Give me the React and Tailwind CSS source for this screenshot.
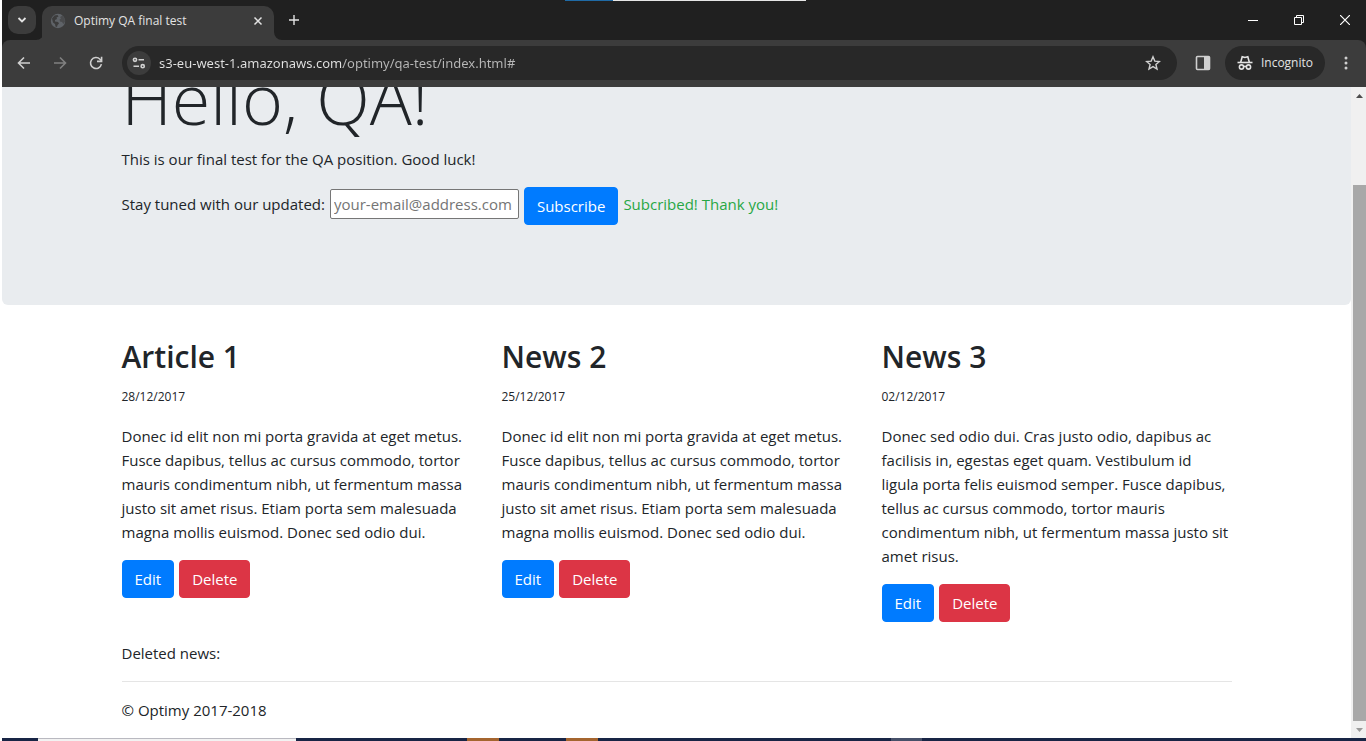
import React from "react";

const articles = [
  {
    title: "Article 1",
    date: "28/12/2017",
    body: "Donec id elit non mi porta gravida at eget metus. Fusce dapibus, tellus ac cursus commodo, tortor mauris condimentum nibh, ut fermentum massa justo sit amet risus. Etiam porta sem malesuada magna mollis euismod. Donec sed odio dui.",
  },
  {
    title: "News 2",
    date: "25/12/2017",
    body: "Donec id elit non mi porta gravida at eget metus. Fusce dapibus, tellus ac cursus commodo, tortor mauris condimentum nibh, ut fermentum massa justo sit amet risus. Etiam porta sem malesuada magna mollis euismod. Donec sed odio dui.",
  },
  {
    title: "News 3",
    date: "02/12/2017",
    body: "Donec sed odio dui. Cras justo odio, dapibus ac facilisis in, egestas eget quam. Vestibulum id ligula porta felis euismod semper. Fusce dapibus, tellus ac cursus commodo, tortor mauris condimentum nibh, ut fermentum massa justo sit amet risus.",
  },
];

function TabStrip() {
  return (
    <div className="flex h-10 items-center bg-[#202020] text-[#e3e3e3]">
      <button aria-label="Search tabs" className="ml-1.5 flex size-7 items-center justify-center rounded-[10px] bg-[#3c3c3c]">
        <svg width="10" height="8" viewBox="0 0 10 8" fill="none" stroke="currentColor" strokeWidth="1.8">
          <path d="M1.5 2 5 5.5 8.5 2" />
        </svg>
      </button>
      <svg className="self-end" width="8" height="8" viewBox="0 0 8 8" fill="#3c3c3c">
        <path d="M8 0v8H0a8 8 0 0 0 8-8z" />
      </svg>
      <div className="-ml-0.5 flex h-[34px] w-[232px] items-center self-end rounded-t-[10px] bg-[#3c3c3c] px-2 pb-1">
        <svg width="16" height="16" viewBox="0 0 16 16">
          <circle cx="8" cy="8" r="7.2" fill="#5f6368" />
          <path d="M2 5.500 4.500 2.500 7.500 2l1 1.500-2 1 .5 1.500-2 1v1.500l3 .5 1 1.500-1.500 1.500-.5 2-1.500-.5-.5-2.500-2-1.500z" fill="#3c3c3c" />
          <path d="M10 4l2.500-1.500 2 3 .5 3-1.500 2.500-1.500-2-2-.5-.5-2 1.500-1z" fill="#3c3c3c" opacity=".6" />
        </svg>
        <span className="ml-2 flex-1 text-[12px] leading-4 whitespace-nowrap">Optimy QA final test</span>
        <button aria-label="Close tab" className="flex size-4 items-center justify-center">
          <svg width="10" height="10" viewBox="0 0 10 10" stroke="currentColor" strokeWidth="1.5">
            <path d="M1.500 1.500l7 7M8.500 1.500l-7 7" />
          </svg>
        </button>
      </div>
      <svg className="self-end" width="8" height="8" viewBox="0 0 8 8" fill="#3c3c3c">
        <path d="M0 0v8h8a8 8 0 0 1-8-8z" />
      </svg>
      <button aria-label="New tab" className="ml-0.5 flex size-5 items-center justify-center">
        <svg width="12" height="12" viewBox="0 0 12 12" stroke="currentColor" strokeWidth="1.400">
          <path d="M6 1v10M1 6h10" />
        </svg>
      </button>
      <div className="ml-auto flex text-white">
        <button aria-label="Minimize" className="flex h-8 w-[46px] items-center justify-center">
          <svg width="10" height="10" viewBox="0 0 10 10" stroke="currentColor">
            <path d="M0 5.500h10" />
          </svg>
        </button>
        <button aria-label="Restore" className="flex h-8 w-[46px] items-center justify-center">
          <svg width="10" height="10" viewBox="0 0 10 10" stroke="currentColor" fill="none">
            <path d="M.5 2.500h7v7h-7zM2.500 2.500v-2h7v7h-2" />
          </svg>
        </button>
        <button aria-label="Close" className="flex h-8 w-11 items-center justify-center pl-0.5">
          <svg width="10" height="10" viewBox="0 0 10 10" stroke="currentColor" strokeWidth="1.200">
            <path d="M0 0l10 10M10 0L0 10" />
          </svg>
        </button>
      </div>
    </div>
  );
}

function Toolbar() {
  return (
    <div className="flex h-[47px] items-center rounded-t-lg bg-[#3c3c3c] pb-px text-[#d0d0d0]">
      <button aria-label="Back" className="ml-2.5 flex size-6 items-center justify-center">
        <svg width="14" height="14" viewBox="0 0 14 14" fill="none" stroke="currentColor" strokeWidth="1.600">
          <path d="M13 7H2M7 1.500 1.500 7 7 12.500" />
        </svg>
      </button>
      <button aria-label="Forward" className="ml-3 flex size-6 items-center justify-center text-[#808080]">
        <svg width="14" height="14" viewBox="0 0 14 14" fill="none" stroke="currentColor" strokeWidth="1.600">
          <path d="M1 7h11M7 1.500 12.500 7 7 12.500" />
        </svg>
      </button>
      <button aria-label="Reload" className="ml-3 flex size-6 items-center justify-center">
        <svg width="14" height="14" viewBox="0 0 14 14" fill="none" stroke="currentColor" strokeWidth="1.600">
          <path d="M12.400 8.200A5.500 5.500 0 1 1 11 3.200L12.500 4.700" />
          <path d="M12.600 .8v4.600H8" />
        </svg>
      </button>
      <div className="ml-3.5 flex h-[34px] flex-1 items-center rounded-full bg-[#282828] pr-4 pl-[5px]">
        <button aria-label="View site information" className="flex size-6 items-center justify-center rounded-full bg-[#3c3c3c]">
          <svg width="14" height="12" viewBox="0 0 14 12" fill="none" stroke="currentColor" strokeWidth="1.600">
            <circle cx="3" cy="2.800" r="1.600" />
            <path d="M6.500 2.800H12M1.500 9.200H7" />
            <circle cx="10.700" cy="9.200" r="1.600" />
          </svg>
        </button>
        <input
          aria-label="Address"
          readOnly
          defaultValue="s3-eu-west-1.amazonaws.com/optimy/qa-test/index.html#"
          className="ml-2 min-w-0 flex-1 bg-[linear-gradient(to_right,#e3e3e3_184px,#b8b8b8_184px)] bg-clip-text font-['Noto_Sans',sans-serif] text-[13px] leading-5 text-transparent outline-none"
        />
        <button aria-label="Bookmark this tab">
          <svg width="16" height="16" viewBox="0 0 16 16" fill="none" stroke="currentColor" strokeWidth="1.400">
            <path d="M8 1.800l1.800 4.300 4.600.4-3.500 3 1.100 4.500L8 11.600 4 14l1.100-4.500-3.500-3 4.600-.4z" />
          </svg>
        </button>
      </div>
      <button aria-label="Side panel" className="ml-[18px] flex size-4 items-center justify-center">
        <svg width="16" height="16" viewBox="0 0 16 16">
          <rect x="1.500" y="1.500" width="13" height="13" rx="1" fill="none" stroke="currentColor" strokeWidth="1.600" />
          <path d="M9 1.500h5.500v13H9z" fill="currentColor" />
        </svg>
      </button>
      <button className="ml-3.5 flex h-[34px] items-center gap-2 rounded-full bg-[#282828] px-3 text-[12px] text-[#e3e3e3]">
        <svg width="16" height="16" viewBox="0 0 16 16" fill="none" stroke="currentColor" strokeWidth="1.600">
          <path d="M.5 7.500h15" />
          <path d="M3.700 7.200 5.200 1.700l2.800.8 2.800-.8 1.500 5.500" />
          <circle cx="4.500" cy="12" r="2.100" />
          <circle cx="11.500" cy="12" r="2.100" />
          <path d="M6.500 11.700Q8 10.800 9.500 11.700" />
        </svg>
        Incognito
      </button>
      <button aria-label="Menu" className="mr-2.5 ml-[11px] flex h-6 w-5 items-center justify-center">
        <svg width="4" height="16" viewBox="0 0 4 16" fill="currentColor">
          <circle cx="2" cy="3" r="1.500" />
          <circle cx="2" cy="8" r="1.500" />
          <circle cx="2" cy="13" r="1.500" />
        </svg>
      </button>
    </div>
  );
}

function Article({ title, date, body }) {
  return (
    <article>
      <h2 className="mb-2.5 text-[30px] leading-[38px] font-semibold">{title}</h2>
      <p className="mb-4 text-[12px] leading-[22px]">{date}</p>
      <p className="mb-4 leading-6">{body}</p>
      <div className="flex gap-[5px]">
        <button className="h-[38px] rounded border border-[#007bff] bg-[#007bff] px-3 text-white">Edit</button>
        <button className="h-[38px] rounded border border-[#dc3545] bg-[#dc3545] px-3 text-white">Delete</button>
      </div>
    </article>
  );
}

function Scrollbar() {
  return (
    <div className="flex w-[15px] flex-col bg-[#f0f0f0] pl-0.5" aria-hidden="true">
      <div className="flex h-[17px] items-center justify-center">
        <svg width="7" height="4" viewBox="0 0 7 4" fill="#4d4d4d">
          <path d="M0 4 3.500 0 7 4z" />
        </svg>
      </div>
      <div className="flex flex-1 flex-col pt-[81px]">
        <div className="flex-1 bg-[#a8a8a8]" />
      </div>
      <div className="flex h-[17px] items-center justify-center">
        <svg width="7" height="4" viewBox="0 0 7 4" fill="#9a9a9a">
          <path d="M0 0h7L3.500 4z" />
        </svg>
      </div>
    </div>
  );
}

export default function App() {
  return (
    <div className="flex h-screen flex-col overflow-hidden bg-white font-['Open_Sans','Noto_Sans',sans-serif]">
      <div className="relative ml-0.5 bg-[#202020]">
        <TabStrip />
        <Toolbar />
        <div className="absolute top-0 left-[563px] flex h-px w-[241px] bg-[#e6e6e6]">
          <div className="w-12 bg-[#1f6aa5]" />
        </div>
      </div>

      <div className="ml-0.5 flex min-h-0 flex-1">
        <main className="min-w-0 flex-1 overflow-hidden text-[15px] text-[#212529]">
          <section className="mb-[33px] rounded-b-md bg-[#e9ecef] pb-20">
            <div className="mx-auto max-w-[1140px] px-[15px]">
              <h1 className="-mt-8 mb-1.5 text-[70px] leading-[86px] font-light">Hello, QA!</h1>
              <p className="mb-4 leading-6">This is our final test for the QA position. Good luck!</p>
              <form className="flex items-center gap-[5px]" onSubmit={(e) => e.preventDefault()}>
                <label htmlFor="email" className="mb-1">Stay tuned with our updated:</label>
                <input
                  id="email"
                  type="email"
                  placeholder="your-email@address.com"
                  className="mb-1 h-[30px] w-[189px] rounded-xs border border-[#767676] bg-white px-[3px] placeholder:text-[#757575]"
                />
                <button className="h-[38px] rounded border border-[#007bff] bg-[#007bff] px-3 text-white">Subscribe</button>
                <span className="mb-1 text-[#28a745]">Subcribed! Thank you!</span>
              </form>
            </div>
          </section>

          <div className="mx-auto max-w-[1140px] px-[15px]">
            <div className="grid grid-cols-3 gap-[30px]">
              {articles.map((a) => (
                <Article key={a.title} {...a} />
              ))}
            </div>
            <p className="mt-[19px] leading-6">Deleted news:</p>
            <hr className="my-4 border-black/10" />
            <footer className="leading-6">© Optimy 2017-2018</footer>
          </div>
        </main>
        <Scrollbar />
      </div>

      <div className="ml-0.5 flex h-[3px] bg-[#182545]" aria-hidden="true">
        <div className="ml-9 w-[258px] border-t border-[#b9b9c0] bg-[#f2f2f2]" />
        <div className="ml-[171px] w-8 bg-[#a5652f]" />
        <div className="ml-[67px] w-8 bg-[#a5652f]" />
        <div className="ml-[293px] w-[31px] bg-[#465069]" />
      </div>
    </div>
  );
}
